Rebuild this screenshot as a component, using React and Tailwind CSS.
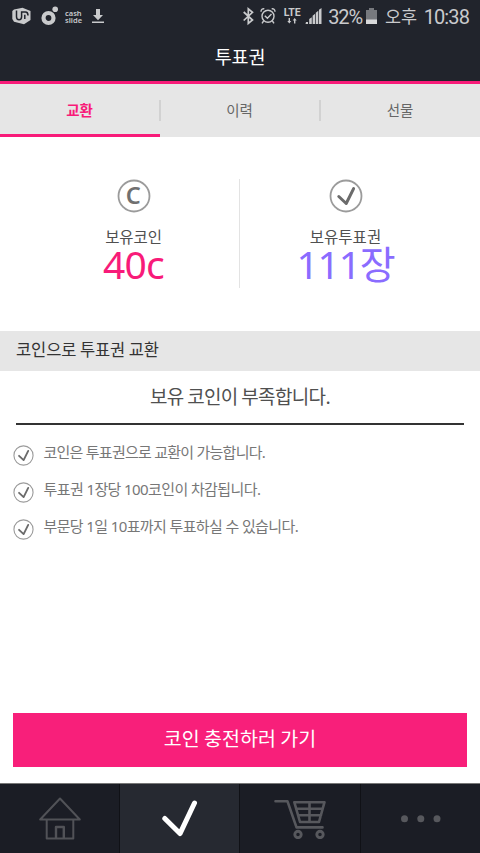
import React, { useState } from "react";

const tabs = ["교환", "이력", "선물"];

const notices = [
	{ text: "코인은 투표권으로 교환이 가능합니다.", tracking: "tracking-[-0.75px]" },
	{ text: "투표권 1장당 100코인이 차감됩니다.", tracking: "tracking-[-0.6px]" },
	{ text: "부문당 1일 10표까지 투표하실 수 있습니다.", tracking: "tracking-[-0.62px]" },
];

const CircleCheck = ({ className }) => (
	<svg className={className} viewBox="0 0 34 34" fill="none">
		<circle cx="17" cy="17" r="15.5" stroke="#9b9b9b" strokeWidth="1.8" />
		<path d="M9.8 17.5 L17.2 24.5 L24.6 9.6" stroke="#6b6b6b" strokeWidth="3" strokeLinecap="round" strokeLinejoin="round" />
	</svg>
);

const StatusBar = () => (
	<div className="h-[34px] flex items-start justify-between text-[#c9cacc]">
		<div className="flex pl-3 pt-[6px]">
			<svg className="w-5 h-5" viewBox="0 0 20 20" fill="none">
				<path d="M2 3.5 L10.5 1.8 L18.5 5 L18.5 14 L12 18.3 L2 15.8 L0.3 13 L0.3 5 Z" fill="#c9cacc" />
				<path d="M4.5 4.6 V10.8 C4.5 14.7 9.6 14.7 9.6 10.8 V6 H13.5 C15.8 6 16 7.5 16 9.5 M12.8 8.8 V13" stroke="#21242c" strokeWidth="1.5" />
			</svg>
			<svg className="w-[18px] h-5 ml-[9px]" viewBox="0 0 18 20" fill="none">
				<circle cx="7.5" cy="12" r="5" stroke="#c9cacc" strokeWidth="4.2" />
				<circle cx="14.2" cy="3.2" r="2.8" fill="#c9cacc" />
			</svg>
			<div className="ml-[6px] mt-[4px] w-[18px] text-[7.5px] leading-[6.5px] font-semibold font-['Noto_Sans',sans-serif]">
				<div>cash</div>
				<div>slide</div>
			</div>
			<svg className="w-3 h-[18px] ml-[9px]" viewBox="0 0 12 18" fill="#c9cacc">
				<path d="M4 3 H8 V9 H11 L6 14.3 L1 9 H4 Z" />
				<path d="M0 15.5 H12 V17 H0 Z" />
			</svg>
		</div>
		<div className="flex pr-[11px] pt-[6px]">
			<svg className="w-[11px] h-5" viewBox="0 0 11 20" fill="none" stroke="#c9cacc" strokeWidth="1.7">
				<path d="M0.7 6 L9.5 14 L5.3 17.5 V2.8 L9.5 6.3 L0.7 14.5" />
			</svg>
			<svg className="w-4 h-5 ml-[6px]" viewBox="0 0 16 20" fill="none" stroke="#c9cacc" strokeWidth="1.4">
				<circle cx="8" cy="10.2" r="6" />
				<path d="M4.8 9.8 L7.4 12.3 L11.5 8 M3.6 15 L2 17.3 M12.4 15 L14 17.3 M1 5.7 C1 3.5 2.5 2.5 4.3 2.8 M15 5.7 C15 3.5 13.5 2.5 11.7 2.8" />
			</svg>
			<div className="ml-[7px] w-[18px] h-5 flex flex-col items-center">
				<span className="mt-[2px] text-[10.5px] leading-[10px] font-bold font-['Roboto',sans-serif]">LTE</span>
				<svg className="w-[10px] h-[6px]" viewBox="0 0 10 6" fill="#c9cacc">
					<path d="M1.6 0 H3 V3 H4.3 L2.3 5.5 L0.3 3 H1.6 Z M7 5.5 H8.4 V2.5 H9.7 L7.7 0 L5.7 2.5 H7 Z" />
				</svg>
			</div>
			<svg className="w-[17px] h-5 ml-1" viewBox="0 0 17 20" fill="#c9cacc">
				<path d="M1 16 H3 V18 H0.5 Z M4.2 13 L6.8 11.2 V18 H4.2 Z M7.6 9.7 L10.1 7.8 V18 H7.6 Z M10.8 6.7 L13.3 4.8 V18 H10.8 Z M14 3.8 L16.5 2 V18 H14 Z" />
			</svg>
			<span className="ml-[6px] text-[20px] leading-[22px] tracking-[-1.1px] font-['Roboto',sans-serif]">32%</span>
			<svg className="w-[11px] h-5 ml-[4px]" viewBox="0 0 11 20">
				<path d="M3 2 H8 V4 H11 V18 H0 V4 H3 Z" fill="#77797e" />
				<path d="M0 13.5 H11 V18 H0 Z" fill="#d8d9da" />
			</svg>
			<span className="ml-[8px] text-[17.5px] leading-[20px] tracking-[-0.3px] font-['Noto_Sans_CJK_KR',sans-serif]">오후</span>
			<span className="ml-[7px] text-[20px] leading-[22px] tracking-[-0.9px] font-['Roboto',sans-serif]">10:38</span>
		</div>
	</div>
);

const Home = () => (
	<svg className="w-[42px] h-[44px]" viewBox="0 0 42 44" fill="none" stroke="#515257" strokeWidth="2" strokeLinejoin="round">
		<path d="M21 1.5 L1.2 22.5 H40.8 Z" />
		<path d="M7.7 23 V41.5 H34.3 V23" />
		<path d="M17 41 V30 H24.8 V41" strokeWidth="2.4" />
	</svg>
);

const Check = () => (
	<svg className="w-[36px] h-[38px]" viewBox="0 0 36 38" fill="none" stroke="#fff" strokeWidth="5" strokeLinecap="round" strokeLinejoin="round">
		<path d="M2.8 18.5 L18 33.6 L32.5 3" />
	</svg>
);

const Cart = () => (
	<svg className="w-[52px] h-[40px]" viewBox="0 0 52 40" fill="none" stroke="#57585d" strokeWidth="2.6" strokeLinecap="round" strokeLinejoin="round">
		<path d="M1.5 2.3 H13.5 L22.5 28.4 H48.5" />
		<path d="M20.3 3.2 H50.5 L45 23 H26 Z M22.5 9.8 H48.5 M24.3 16.3 H47 M35.5 3.2 V23" />
		<circle cx="24" cy="35.5" r="3.2" strokeWidth="2.9" />
		<circle cx="46" cy="35.5" r="3.2" strokeWidth="2.9" />
	</svg>
);

const More = () => (
	<svg className="w-[40px] h-[8px]" viewBox="0 0 40 8" fill="#57585d">
		<circle cx="3.5" cy="3.7" r="3.5" />
		<circle cx="19.8" cy="3.7" r="3.5" />
		<circle cx="36" cy="3.7" r="3.5" />
	</svg>
);

const App = () => {
	const [activeTab, setActiveTab] = useState(0);

	return (
		<div className="w-[480px] h-[853px] bg-white flex flex-col overflow-hidden font-['Noto_Sans_CJK_KR',sans-serif]">
			<header className="h-[84px] bg-[#21242c] border-b-[3px] border-[#f81b79] shrink-0">
				<StatusBar />
				<h1 className="pt-[9px] text-center text-white text-[18.5px] leading-[26px] tracking-[-0.2px]">투표권</h1>
			</header>

			<nav className="h-[53px] bg-[#e6e6e6] flex shrink-0">
				{tabs.map((tab, index) => (
					<button
						key={tab}
						className={`flex-1 flex items-center border-b-[3px] ${activeTab === index ? "border-[#f81b79] text-[#f81b79] font-bold" : "border-transparent text-[#666]"}`}
						onClick={() => setActiveTab(index)}
					>
						<span className="flex-1 pt-[2px] text-[14.5px] leading-5">{tab}</span>
						{index < tabs.length - 1 && <span className="w-[2px] h-[21px] -mr-px mt-[2px] bg-[#d2d2d2]" />}
					</button>
				))}
			</nav>

			<section className="h-[194px] flex pt-[42px] shrink-0">
				<div className="w-[240px] h-[109px] border-r border-[#e3e3e3] flex flex-col items-center pl-[28px]">
					<svg className="w-[34px] h-[34px]" viewBox="0 0 34 34" fill="none">
						<circle cx="17" cy="17" r="15.5" stroke="#9b9b9b" strokeWidth="1.8" />
						<text x="16.2" y="25" textAnchor="middle" fontSize="23.5" fontWeight="600" fill="#707070" fontFamily="Noto Sans, sans-serif">C</text>
					</svg>
					<span className="mt-[13px] text-[15.5px] leading-5 tracking-[-0.1px] text-[#505050]">보유코인</span>
					<span className="mt-[-3px] text-[39px] leading-[42px] tracking-[-0.7px] text-[#f81b79] font-['Noto_Sans',sans-serif]">40c</span>
				</div>
				<div className="w-[240px] h-[109px] flex flex-col items-center pr-[29px]">
					<CircleCheck className="w-[34px] h-[34px]" />
					<span className="mt-[13px] text-[15.5px] leading-5 text-[#505050]">보유투표권</span>
					<span className="mt-[-3px] text-[39px] leading-[42px] tracking-[-1.2px] text-[#8a6cff] whitespace-nowrap font-['Noto_Sans','Noto_Sans_CJK_KR',sans-serif]">111장</span>
				</div>
			</section>

			<h2 className="h-[40px] pl-4 bg-[#e6e6e6] text-[#333] text-[16.5px] leading-[37px] tracking-[-0.1px] shrink-0">코인으로 투표권 교환</h2>

			<section className="px-4 shrink-0">
				<p className="h-[54px] border-b-2 border-[#333] text-center text-[#505050] text-[19px] leading-[49px] tracking-[-0.65px]">보유 코인이 부족합니다.</p>
			</section>

			<ul className="pt-[19px] pl-[13px] shrink-0">
				{notices.map((notice) => (
					<li key={notice.text} className="h-[37px] flex items-start">
						<CircleCheck className="w-[21px] h-[21px] mt-[1px]" />
						<span className={`ml-[9.5px] text-[15px] leading-[17px] text-[#777] whitespace-nowrap font-['Noto_Sans','Noto_Sans_CJK_KR',sans-serif] ${notice.tracking}`}>{notice.text}</span>
					</li>
				))}
			</ul>

			<div className="flex-1 flex flex-col justify-end px-[13px] pb-4">
				<button className="h-[54px] bg-[#f81f7a] text-white text-[19.5px] leading-[50px] pb-[4px]">코인 충전하러 가기</button>
			</div>

			<footer className="h-[70px] flex bg-[#1b1d25] border-t border-[#777] shrink-0">
				<div className="w-[120px] flex items-center justify-center border-r border-[#101116]"><Home /></div>
				<div className="w-[120px] flex items-center justify-center bg-[#262931] border-r border-[#101116]"><Check /></div>
				<div className="w-[121px] flex items-center justify-center border-r border-[#101116]"><Cart /></div>
				<div className="flex-1 flex items-center justify-center"><More /></div>
			</footer>
		</div>
	);
};

export default App;
